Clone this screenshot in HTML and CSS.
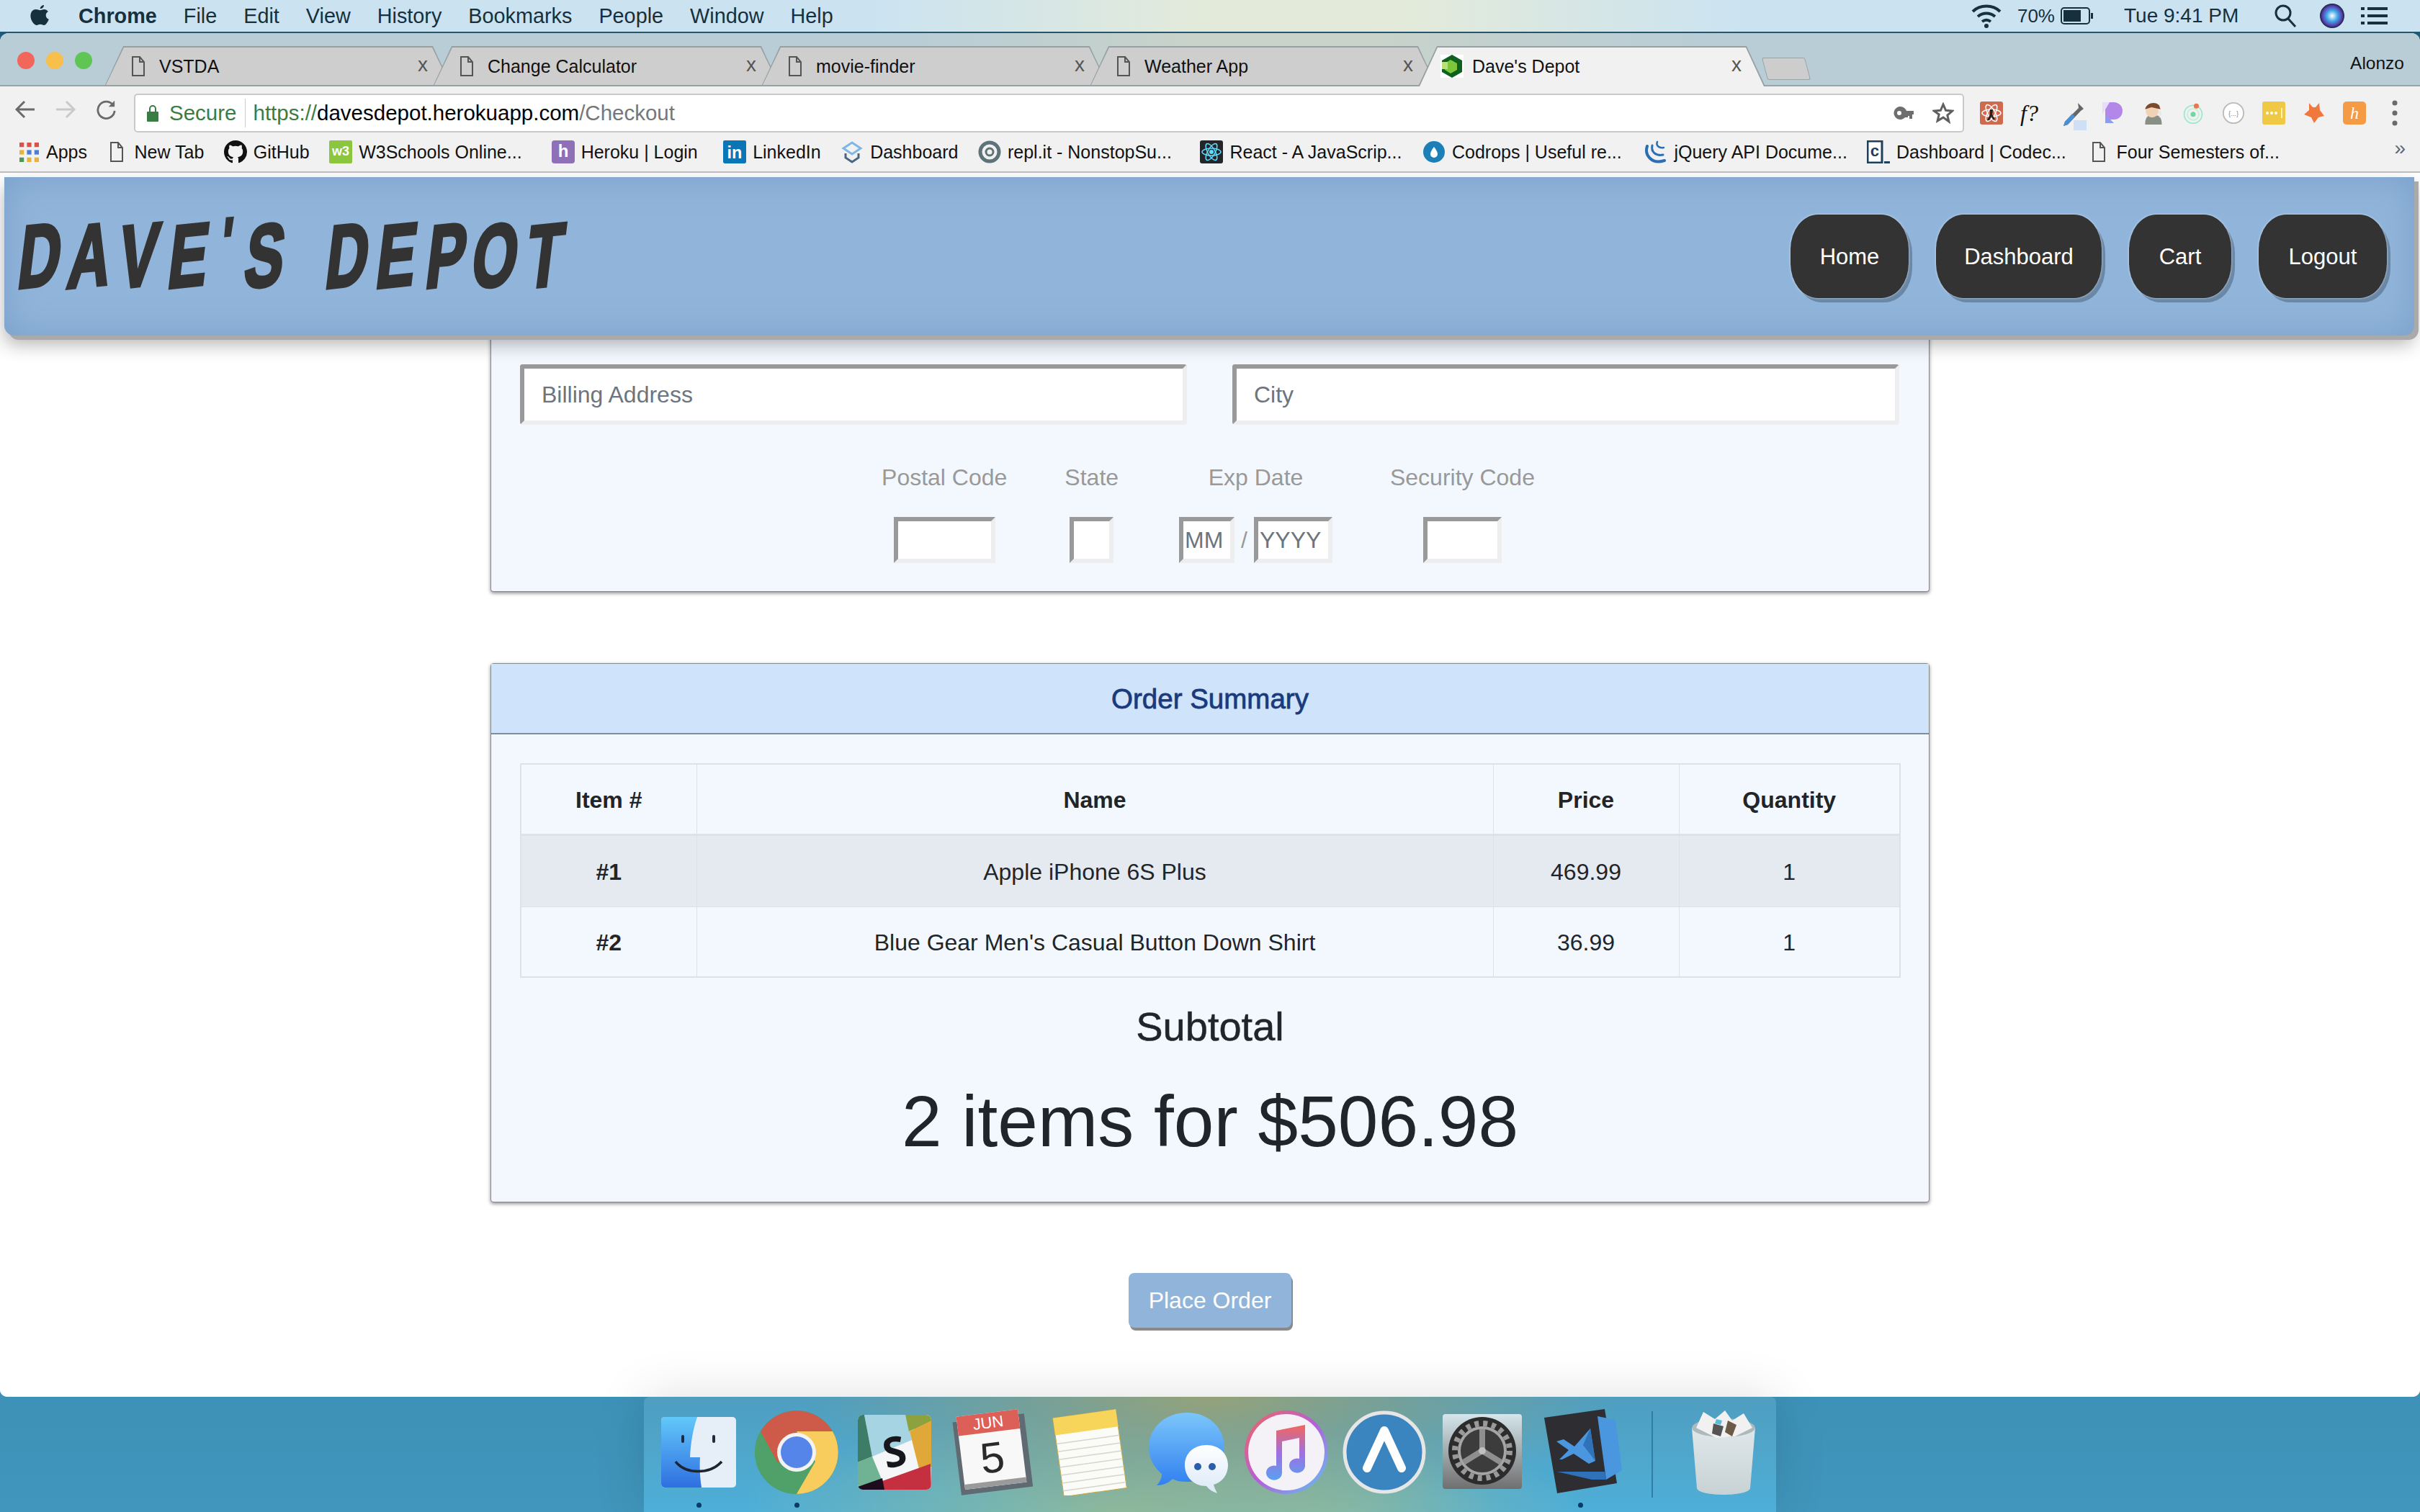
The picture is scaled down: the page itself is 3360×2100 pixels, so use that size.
FILE: index.html
```html
<!DOCTYPE html>
<html lang="en">
<head>
<meta charset="utf-8">
<title>Dave's Depot</title>
<link rel="stylesheet" href="styles.css">
</head>
<body>
<div class="menubar">
  <svg class="apple" viewBox="0 0 28 32"><path d="M20 1c.2 2.400-2.100 5.300-5.200 5.200C14.500 3.600 17.200 1.200 20 1zM14.800 8.300c1.400 0 3-1.300 5.400-1.300 2.200 0 4.300 1 5.600 2.900-4.600 2.700-3.900 9 1 10.900-1.200 3.300-4 8.200-6.800 8.200-1.900 0-2.700-1.200-5-1.200s-3.200 1.200-5 1.200C6.200 29 1.400 22.200 1.400 16c0-5.600 3.700-8.900 7.300-8.900 2.400 0 4.300 1.200 6.100 1.200z"/></svg>
  <nav class="menus">
    <b>Chrome</b><span>File</span><span>Edit</span><span>View</span><span>History</span><span>Bookmarks</span><span>People</span><span>Window</span><span>Help</span>
  </nav>
  <div class="status">
    <svg class="st-wifi" viewBox="0 0 42 38" fill="none" stroke="#16303e" stroke-width="4"><path d="M2 13C12 3 30 3 40 13M9 20c7-6 17-6 24 0M15 27c4-3 8-3 12 0"/><circle cx="21" cy="33" r="3" fill="#16303e" stroke="none"/></svg>
    <span class="st-pct">70%</span>
    <svg class="st-batt" viewBox="0 0 46 24"><rect x="1" y="1" width="39" height="22" rx="4" fill="none" stroke="#16303e" stroke-width="2"/><rect x="4" y="4" width="24" height="16" fill="#16303e"/><rect x="42" y="8" width="3" height="8" fill="#16303e"/></svg>
    <span class="st-time">Tue 9:41 PM</span>
    <svg class="st-search" viewBox="0 0 32 32" fill="none" stroke="#16303e" stroke-width="3"><circle cx="13" cy="12" r="10"/><path d="M20 20l10 11"/></svg>
    <svg class="st-siri" viewBox="0 0 34 34"><defs><radialGradient id="siri"><stop offset="0" stop-color="#fff"/><stop offset=".45" stop-color="#3fa8e8"/><stop offset=".8" stop-color="#5b3fb0"/><stop offset="1" stop-color="#14233a"/></radialGradient></defs><circle cx="17" cy="17" r="17" fill="url(#siri)"/></svg>
    <svg class="st-list" viewBox="0 0 37 24" fill="#16303e"><rect width="5" height="4"/><rect x="9" width="28" height="4"/><rect y="10" width="5" height="4"/><rect x="9" y="10" width="28" height="4"/><rect y="20" width="5" height="4"/><rect x="9" y="20" width="28" height="4"/></svg>
  </div>
</div>

<div class="window">
  <div class="tabstrip">
    <div class="lights"><i class="red"></i><i class="amber"></i><i class="green"></i></div>
    <div class="tabs">
      <div class="tab"><svg class="doc" viewBox="0 0 18 28"><path d="M1 1h10l6 7v19H1z M11 1v7h6" fill="none" stroke="#555" stroke-width="2"/></svg><span>VSTDA</span><em>x</em></div>
      <div class="tab"><svg class="doc" viewBox="0 0 18 28"><path d="M1 1h10l6 7v19H1z M11 1v7h6" fill="none" stroke="#555" stroke-width="2"/></svg><span>Change Calculator</span><em>x</em></div>
      <div class="tab"><svg class="doc" viewBox="0 0 18 28"><path d="M1 1h10l6 7v19H1z M11 1v7h6" fill="none" stroke="#555" stroke-width="2"/></svg><span>movie-finder</span><em>x</em></div>
      <div class="tab"><svg class="doc" viewBox="0 0 18 28"><path d="M1 1h10l6 7v19H1z M11 1v7h6" fill="none" stroke="#555" stroke-width="2"/></svg><span>Weather App</span><em>x</em></div>
      <div class="tab active"><svg class="fav" viewBox="0 0 32 32"><rect width="32" height="32" fill="#fff"/><path d="M16 0l14 8v16l-14 8-14-8V8z" fill="#0f5f1e"/><path d="M14 7l9 5v9l-9 5-8-5v-9z" fill="#7cc63a"/><path d="M2 10h8v10H2z" fill="#b7e07a"/></svg><span>Dave's Depot</span><em>x</em></div>
      <div class="newtab"></div>
    </div>
    <span class="profile">Alonzo</span>
  </div>

  <div class="toolbar">
    <svg class="nav-ic" viewBox="0 0 28 28" fill="none" stroke="#6a6a6a" stroke-width="3"><path d="M27 14H3M13 3L2 14l11 11"/></svg>
    <svg class="nav-ic" viewBox="0 0 28 28" fill="none" stroke="#c9c9c9" stroke-width="3"><path d="M1 14h24M15 3l11 11-11 11"/></svg>
    <svg class="nav-ic" viewBox="0 0 30 30" fill="none" stroke="#6a6a6a" stroke-width="3"><path d="M26 9a12.500 12.500 0 1 0 2 8"/><path d="M28 2v9h-9z" fill="#6a6a6a" stroke="none"/></svg>
    <div class="omnibox">
      <svg class="lock" viewBox="0 0 16 24"><path d="M4 10V6a4 4 0 0 1 8 0v4" fill="none" stroke="#3a7d44" stroke-width="2"/><rect y="10" width="16" height="14" rx="1" fill="#3a7d44"/></svg>
      <span class="secure">Secure</span>
      <span class="url"><span class="u-scheme">https://</span>davesdepot.herokuapp.com<span class="u-path">/Checkout</span></span>
      <svg class="key" viewBox="0 0 28 20" fill="#6e6e6e"><path d="M9 1a9 9 0 1 1-8 12h0A9 9 0 0 1 9 1zm-1 6a3 3 0 1 0 0 6 3 3 0 0 0 0-6z" fill-rule="evenodd"/><path d="M16 7h12v5h-2v6h-4v-4h-2v2h-4z"/></svg>
      <svg class="star" viewBox="0 0 30 30" fill="none" stroke="#5f5f5f" stroke-width="3"><path d="M15 3l3.600 8.300 9 .8-6.800 5.900 2.100 8.800L15 21.100 7.100 25.800 9.200 17 2.400 12.100l9-.8z"/></svg>
    </div>
    <div class="exts">
      <svg viewBox="0 0 32 32"><rect width="32" height="32" rx="3" fill="#cf6a4e"/><g fill="none" stroke="#fff" stroke-width="1.500"><ellipse cx="16" cy="16" rx="13" ry="5"/><ellipse cx="16" cy="16" rx="13" ry="5" transform="rotate(60 16 16)"/><ellipse cx="16" cy="16" rx="13" ry="5" transform="rotate(120 16 16)"/></g><path d="M14 11h4l-1 7 4 7h-3l-2-4-3 5h-3l4-8z" fill="#222"/></svg>
      <span class="fq">f?</span>
      <svg viewBox="0 0 36 40"><path d="M24 2l8 8-4 3-18 19-6 2 2-6L25 9z" fill="#666"/><path d="M6 28l10-11 4 4-10 11-6 2z" fill="#4a8fd6"/><rect x="18" y="26" width="18" height="14" fill="#cfe0f6"/></svg>
      <svg viewBox="0 0 32 32"><path d="M6 1h12a12 12 0 0 1 0 24H6z" fill="#b387ea"/><path d="M2 1h10L2 18z" fill="#e8dcfa"/><path d="M6 30V18L18 30z" fill="#8c9cf0"/></svg>
      <svg viewBox="0 0 32 36"><path d="M4 36c0-8 2-12 6-14h14c4 2 6 6 6 14z" fill="#8a8f86"/><circle cx="15" cy="15" r="10" fill="#f2d2b6"/><path d="M4 12C6 2 20-1 26 6l2 6-14-3z" fill="#7a4a2a"/><path d="M26 12l4 6-4 8z" fill="#e8e8e8"/></svg>
      <svg viewBox="0 0 32 36" fill="none"><circle cx="16" cy="20" r="14" stroke="#9fe8cc" stroke-width="2"/><circle cx="16" cy="20" r="9" stroke="#c0f0dc" stroke-width="2"/><circle cx="16" cy="20" r="4" fill="#6fd99c"/><circle cx="21" cy="7" r="4" fill="#e8784a"/></svg>
      <svg viewBox="0 0 34 34"><circle cx="17" cy="17" r="15" fill="#fff" stroke="#bbb" stroke-width="2"/><text x="17" y="21" text-anchor="middle" class="ext-txt">{...}</text></svg>
      <svg viewBox="0 0 32 32"><rect width="32" height="32" rx="3" fill="#efc945"/><g fill="#fff"><circle cx="7" cy="16" r="2"/><circle cx="13" cy="16" r="2"/><circle cx="19" cy="16" r="2"/><rect x="26" y="9" width="1.500" height="14"/></g></svg>
      <svg viewBox="0 0 32 32"><path d="M9 2l5 6h4l5-6 1 10 6 8-8 2-6 8-4-8-10-4 7-6z" fill="#f0783c"/></svg>
      <svg viewBox="0 0 32 32"><rect width="32" height="32" rx="5" fill="#f59a45"/><text x="16" y="24" text-anchor="middle" class="ext-h">h</text></svg>
      <svg class="kebab" viewBox="0 0 8 36" fill="#6a6a6a"><circle cx="4" cy="4" r="3.500"/><circle cx="4" cy="18" r="3.500"/><circle cx="4" cy="32" r="3.500"/></svg>
    </div>
  </div>

  <div class="bookmarks">
    <div class="bm"><svg class="bi apps" viewBox="0 0 26 26"><g fill="#d9534a"><rect width="6" height="6"/><rect x="10" width="6" height="6"/><rect x="20" width="6" height="6"/></g><rect y="10" width="6" height="6" fill="#e8b23c"/><rect x="10" y="10" width="6" height="6" fill="#4a7fd8"/><rect x="20" y="10" width="6" height="6" fill="#4a7fd8"/><rect y="20" width="6" height="6" fill="#4a9a55"/><rect x="10" y="20" width="6" height="6" fill="#e8b23c"/><rect x="20" y="20" width="6" height="6" fill="#e8b23c"/></svg><span>Apps</span></div>
    <div class="bm"><svg class="bi doc" viewBox="0 0 18 28"><path d="M1 1h10l6 7v19H1z M11 1v7h6" fill="none" stroke="#555" stroke-width="2"/></svg><span>New Tab</span></div>
    <div class="bm"><svg class="bi" viewBox="0 0 16 16"><path d="M8 0C3.580 0 0 3.580 0 8c0 3.540 2.290 6.530 5.470 7.590.4.070.55-.17.55-.38 0-.19-.01-.82-.01-1.490-2.010.37-2.530-.49-2.690-.94-.09-.23-.48-.94-.82-1.130-.28-.15-.68-.52-.01-.53.63-.01 1.080.58 1.230.82.72 1.210 1.870.87 2.330.66.070-.52.28-.87.51-1.070-1.780-.2-3.640-.89-3.640-3.950 0-.87.31-1.590.82-2.150-.08-.2-.36-1.020.08-2.120 0 0 .67-.21 2.200.82.64-.18 1.320-.27 2-.27.68 0 1.360.09 2 .27 1.530-1.040 2.200-.82 2.200-.82.44 1.100.16 1.920.08 2.120.51.56.82 1.270.82 2.150 0 3.070-1.870 3.750-3.650 3.950.29.25.54.73.54 1.480 0 1.070-.01 1.930-.01 2.200 0 .21.15.46.55.38A8.013 8.013 0 0 0 16 8c0-4.420-3.580-8-8-8z" fill="#111"/></svg><span>GitHub</span></div>
    <div class="bm trunc"><svg class="bi" viewBox="0 0 32 32"><rect width="32" height="32" rx="2" fill="#8cc63f"/><text x="16" y="21" text-anchor="middle" class="bi-w3">w3</text></svg><span>W3Schools Online...</span></div>
    <div class="bm wide"><svg class="bi" viewBox="0 0 32 32"><rect width="32" height="32" rx="4" fill="#8e6fb8"/><text x="16" y="23" text-anchor="middle" class="bi-h">h</text></svg><span>Heroku | Login</span></div>
    <div class="bm"><svg class="bi" viewBox="0 0 30 30"><rect width="30" height="30" rx="2" fill="#0b76b5"/><text x="15" y="23" text-anchor="middle" class="bi-in">in</text></svg><span>LinkedIn</span></div>
    <div class="bm"><svg class="bi" viewBox="0 0 32 32" fill="none" stroke-width="3"><path d="M4 11l12-8 12 8-12 8z" stroke="#7db7ea"/><path d="M7 18v6l9 6 9-6v-6" stroke="#4a6680"/></svg><span>Dashboard</span></div>
    <div class="bm trunc"><svg class="bi" viewBox="0 0 32 32" fill="none"><circle cx="16" cy="16" r="13" stroke="#5e727a" stroke-width="5"/><circle cx="16" cy="16" r="5" stroke="#5e727a" stroke-width="3"/></svg><span>repl.it - NonstopSu...</span></div>
    <div class="bm trunc"><svg class="bi" viewBox="0 0 32 32"><rect width="32" height="32" rx="3" fill="#22262b"/><g fill="none" stroke="#61dafb" stroke-width="1.500"><ellipse cx="16" cy="16" rx="13" ry="5"/><ellipse cx="16" cy="16" rx="13" ry="5" transform="rotate(60 16 16)"/><ellipse cx="16" cy="16" rx="13" ry="5" transform="rotate(120 16 16)"/></g><circle cx="16" cy="16" r="3" fill="#61dafb"/></svg><span>React - A JavaScrip...</span></div>
    <div class="bm trunc"><svg class="bi" viewBox="0 0 32 32"><circle cx="16" cy="16" r="15" fill="#1d7fb8"/><path d="M16 9c3 4 5 7 5 10a5 5 0 0 1-10 0c0-3 2-6 5-10z" fill="#fff"/></svg><span>Codrops | Useful re...</span></div>
    <div class="bm trunc"><svg class="bi" viewBox="0 0 32 32" fill="none" stroke="#2a6fb5" stroke-linecap="round"><path d="M4 8c-4 12 6 26 24 20" stroke-width="4"/><path d="M11 7c-2 9 5 15 15 13" stroke-width="3"/><path d="M18 2c-2 5 2 9 9 8" stroke-width="2.500"/></svg><span>jQuery API Docume...</span></div>
    <div class="bm trunc"><svg class="bi" viewBox="0 0 32 32"><rect x="1" y="1" width="20" height="30" fill="#fff" stroke="#1f4058" stroke-width="3"/><text x="11" y="22" text-anchor="middle" class="bi-c">c</text><rect x="24" y="29" width="8" height="3" fill="#1f4058"/></svg><span>Dashboard | Codec...</span></div>
    <div class="bm"><svg class="bi doc" viewBox="0 0 18 28"><path d="M1 1h10l6 7v19H1z M11 1v7h6" fill="none" stroke="#555" stroke-width="2"/></svg><span>Four Semesters of...</span></div>
    <span class="more">»</span>
  </div>

  <div class="page">
    <header class="site-header">
      <div class="logo"><i>D</i><i>A</i><i>V</i><i>E</i><i class="apos">'</i><i>S</i> <i class="gap">D</i><i>E</i><i>P</i><i>O</i><i>T</i></div>
      <nav class="site-nav">
        <a class="n-home">Home</a><a class="n-dash">Dashboard</a><a class="n-cart">Cart</a><a class="n-out">Logout</a>
      </nav>
    </header>

    <section class="card card-billing">
      <div class="addr-row">
        <input class="field" placeholder="Billing Address">
        <input class="field" placeholder="City">
      </div>
      <div class="small-row">
        <div class="group"><label>Postal Code</label><input class="box w-postal"></div>
        <div class="group"><label>State</label><input class="box w-state"></div>
        <div class="group g-exp"><label>Exp Date</label><div class="exp"><input class="box w-mm" placeholder="MM"><span>/</span><input class="box w-yy" placeholder="YYYY"></div></div>
        <div class="group"><label>Security Code</label><input class="box w-sec"></div>
      </div>
    </section>

    <section class="card card-order">
      <h2 class="card-title">Order Summary</h2>
      <div class="card-body">
        <table>
          <colgroup><col class="c1"><col class="c2"><col class="c3"><col class="c4"></colgroup>
          <thead><tr><th>Item #</th><th>Name</th><th>Price</th><th>Quantity</th></tr></thead>
          <tbody>
            <tr class="odd"><th>#1</th><td>Apple iPhone 6S Plus</td><td>469.99</td><td>1</td></tr>
            <tr><th>#2</th><td>Blue Gear Men's Casual Button Down Shirt</td><td>36.99</td><td>1</td></tr>
          </tbody>
        </table>
        <h3 class="subtotal">Subtotal</h3>
        <p class="total">2 items for $506.98</p>
      </div>
    </section>

    <div class="order-wrap"><button class="place">Place Order</button></div>
  </div>
</div>

<div class="dock-row">
  <div class="dock">
    <div class="slot running"><svg viewBox="0 0 120 120"><defs><linearGradient id="fb" x1="0" y1="0" x2="0" y2="1"><stop offset="0" stop-color="#62c8fa"/><stop offset="1" stop-color="#2f6fe0"/></linearGradient></defs><rect x="8" y="11" width="104" height="98" rx="5" fill="#e6eef7"/><path d="M13 11h45c-6 18-9 36-10 56h14c-1 15 0 29 2 42H13a5 5 0 0 1-5-5V16a5 5 0 0 1 5-5z" fill="url(#fb)"/><rect x="36" y="36" width="4" height="11" rx="2" fill="#1b2c42"/><rect x="79" y="36" width="4" height="11" rx="2" fill="#1b2c42"/><path d="M28 73c14 18 48 18 64 0" fill="none" stroke="#1b2430" stroke-width="3.500"/></svg></div>
    <div class="slot running"><svg viewBox="0 0 120 120"><circle cx="60" cy="60" r="58" fill="#4fa169"/><path d="M10 31A58 58 0 0 0 60 118L86 73 34 75z" fill="#4fa169"/><path d="M110 31A58 58 0 0 1 60 118L86 73 60 31z" fill="#f8cc5d"/><path d="M10 31A58 58 0 0 1 110 31H60L34 75z" fill="#ce5a49"/><circle cx="60" cy="60" r="27" fill="#f3f3f3"/><circle cx="60" cy="60" r="22" fill="#5585e8"/></svg></div>
    <div class="slot"><svg viewBox="0 0 120 120"><defs><clipPath id="sl"><rect x="9" y="8" width="102" height="104" rx="7"/></clipPath></defs><g clip-path="url(#sl)"><rect x="9" y="8" width="102" height="104" fill="#f4f6f8"/><path d="M18 8H75L84 43 29 66z" fill="#a6d4e2"/><path d="M75 8H111V18L80 31z" fill="#8da23f"/><path d="M81 31L111 16V80L95 87z" fill="#e0a838"/><path d="M9 8H18L29 66 9 74z" fill="#3d7d68"/><path d="M9 74L29 66 43 100 9 112z" fill="#70b394"/><path d="M43 100L110 76 111 112H45z" fill="#c43040"/><path d="M9 108L43 96 46 112H9z" fill="#1e0c1e"/></g><text x="60" y="80" text-anchor="middle" class="slack-s" transform="rotate(-12 60 60)">S</text></svg></div>
    <div class="slot"><svg viewBox="0 0 120 120"><g transform="rotate(-7 60 60)"><rect x="10" y="12" width="100" height="102" fill="#5f6a72"/><rect x="16" y="5" width="86" height="102" fill="#f8f8f8"/><rect x="16" y="5" width="86" height="27" fill="#dd6058"/><rect x="16" y="100" width="86" height="7" fill="#9a9a9a"/><text x="59" y="26" text-anchor="middle" class="cal-m">JUN</text><text x="59" y="88" text-anchor="middle" class="cal-d">5</text></g></svg></div>
    <div class="slot"><svg viewBox="0 0 120 120"><g transform="rotate(-8 60 60)"><rect x="15" y="6" width="88" height="110" fill="#fbfbf8" stroke="#c9a84a"/><rect x="15" y="6" width="88" height="24" fill="#f7d55a"/><g stroke="#d5d5ce" stroke-width="1.500"><path d="M15 42h88M15 53h88M15 64h88M15 75h88M15 86h88M15 97h88M15 108h88"/></g></g></svg></div>
    <div class="slot"><svg viewBox="0 0 120 120"><defs><linearGradient id="mb" x1="0" y1="0" x2="0" y2="1"><stop offset="0" stop-color="#7cc6fa"/><stop offset="1" stop-color="#3180f0"/></linearGradient><linearGradient id="mw" x1="0" y1="0" x2="0" y2="1"><stop offset="0" stop-color="#fff"/><stop offset="1" stop-color="#dbe8f8"/></linearGradient></defs><path d="M58 5c30 0 52 21 52 48 0 27-22 48-52 48-8 0-14-1-20-4-6 6-14 9-22 9 5-5 7-11 7-16C11 80 5 67 5 53 5 26 28 5 58 5z" fill="url(#mb)"/><path d="M85 50c19 0 30 13 30 28 0 13-8 24-20 27 1 4 3 8 5 12-6-2-11-5-15-10-18 0-30-13-30-29 0-16 12-28 30-28z" fill="url(#mw)"/><circle cx="73" cy="80" r="5" fill="#2a5ea8"/><circle cx="93" cy="80" r="5" fill="#2a5ea8"/></svg></div>
    <div class="slot"><svg viewBox="0 0 120 120"><defs><linearGradient id="ir" x1="0" y1="0" x2="1" y2="1"><stop offset="0" stop-color="#f2665c"/><stop offset=".5" stop-color="#b45fd8"/><stop offset="1" stop-color="#5cc8f8"/></linearGradient><linearGradient id="in" x1="0" y1="0" x2="0" y2="1"><stop offset="0" stop-color="#f2665c"/><stop offset=".5" stop-color="#a06fe0"/><stop offset="1" stop-color="#5aa0f0"/></linearGradient></defs><circle cx="60" cy="60" r="58" fill="url(#ir)"/><circle cx="60" cy="60" r="53" fill="#f4f2f6"/><path d="M46 30l40-8v57a11 10 0 1 1-8-10V40l-24 5v44a11 10 0 1 1-8-10z" fill="url(#in)"/></svg></div>
    <div class="slot"><svg viewBox="0 0 120 120"><circle cx="60" cy="60" r="55" fill="#3a84bf" stroke="#e6e6e6" stroke-width="5"/><path d="M36 82L60 30 84 82" fill="none" stroke="#fff" stroke-width="12" stroke-linecap="round" stroke-linejoin="round"/></svg></div>
    <div class="slot"><svg viewBox="0 0 120 120"><defs><linearGradient id="sp" x1="0" y1="0" x2="0" y2="1"><stop offset="0" stop-color="#d5e6ec"/><stop offset="1" stop-color="#6f6f6f"/></linearGradient></defs><rect x="5" y="7" width="110" height="104" rx="4" fill="url(#sp)"/><circle cx="60" cy="58" r="47" fill="#2c2c2c"/><circle cx="60" cy="58" r="38" fill="none" stroke="#999" stroke-width="8" stroke-dasharray="6 6"/><circle cx="60" cy="58" r="32" fill="#3c3c3c" stroke="#a5a5a5" stroke-width="4"/><g stroke="#8f8f8f" stroke-width="8"><path d="M60 58V28M60 58L34 74M60 58l26 16"/></g><circle cx="60" cy="58" r="5" fill="#c0c0c0"/></svg></div>
    <div class="slot running wide-slot"><svg viewBox="0 0 120 120"><path d="M6 12L90 0 107 103 24 117z" fill="#2e2e32"/><path d="M80 10l25 5 9 70-22 13z" fill="#4a97e0"/><path d="M24 87H90L92 98 72 98z" fill="#2f72ba"/><path d="M23 45L33 42 48 52 70 27 77 72 68 76 47 62 31 70 27 70 40 57Z" fill="#4a97e0"/><path d="M70 27L60 50 77 72z" fill="#2f72ba"/></svg></div>
    <div class="dock-sep"></div>
    <div class="slot trash"><svg viewBox="0 0 100 120"><defs><linearGradient id="tr" x1="0" y1="0" x2="0" y2="1"><stop offset="0" stop-color="#dfe7ea"/><stop offset="1" stop-color="#c8d2d4"/></linearGradient></defs><path d="M6 26h88l-7 84c-1 6-20 9-37 9s-36-3-37-9z" fill="url(#tr)"/><ellipse cx="50" cy="26" rx="44" ry="13" fill="#aeb9bd"/><path d="M12 26L22 4 38 14 52 2 62 16 78 6 90 26 66 38 40 40z" fill="#f1f1f1"/><path d="M36 20l14 4-4 14-12-4z" fill="#555"/><path d="M56 16l12 6-6 16-10-6z" fill="#6b5a45"/><path d="M40 14l8 2-2 6-8-2z" fill="#56bcd8"/></svg></div>
  </div>
</div>
</body>
</html>
```
FILE: styles.css
```css
* { box-sizing: border-box; }
html, body { margin: 0; padding: 0; }
body {
  width: 3360px;
  height: 2100px;
  overflow: hidden;
  display: flex;
  flex-direction: column;
  font-family: "Liberation Sans", Arial, sans-serif;
  background: linear-gradient(#1d5b78, #4096bd);
}

/* macOS menu bar */
.menubar {
  height: 46px;
  flex: none;
  display: flex;
  align-items: center;
  padding: 0 45px 0 41px;
  color: #16303e;
  font-size: 28px;
  border-bottom: 2px solid #24566f;
  background: linear-gradient(90deg, #cbe3f1 0 36%, #e3ead9 50% 58%, #cbe3f1 72% 100%);
}
.apple { width: 28px; height: 32px; fill: #16303e; margin-right: 40px; }
.menus { display: flex; gap: 37px; font-size: 28.800px; }
.status { margin-left: auto; display: flex; align-items: center; }
.st-wifi { width: 42px; height: 38px; }
.st-pct { font-size: 26px; margin-left: 22px; }
.st-batt { width: 46px; height: 24px; margin-left: 8px; }
.st-time { margin-left: 42px; width: 160px; white-space: nowrap; }
.st-search { width: 32px; height: 32px; margin-left: 48px; }
.st-siri { width: 34px; height: 34px; margin-left: 32px; }
.st-list { width: 37px; height: 24px; margin-left: 23px; }

/* browser window */
.window {
  flex: none;
  height: 1894px;
  background: #fff;
  display: flex;
  flex-direction: column;
  border-radius: 12px 12px 10px 10px;
  overflow: hidden;
}
.tabstrip {
  height: 74px;
  flex: none;
  display: flex;
  align-items: flex-end;
  position: relative;
  border-bottom: 2px solid #97a5ab;
  background: linear-gradient(90deg, #b9cdd6 0 38%, #c9d3c9 50% 56%, #b9cdd6 70% 100%);
}
.lights { position: absolute; left: 24px; top: 26px; display: flex; gap: 16px; }
.lights i { width: 24px; height: 24px; border-radius: 50%; display: block; }
.lights .red { background: #f2665c; }
.lights .amber { background: #f8bf4d; }
.lights .green { background: #60c653; }
.tabs { display: flex; align-items: flex-end; margin-left: 145px; height: 56px; margin-bottom: -2px; }
.tab {
  width: 482px;
  height: 56px;
  flex: none;
  margin-right: -26px;
  padding: 0 0 0 38px;
  display: flex;
  align-items: center;
  position: relative;
  font-size: 25px;
  color: #111;
  background: #97a0a3;
  clip-path: polygon(0 100%, 26px 0, calc(100% - 26px) 0, 100% 100%);
}
.tab::before {
  content: "";
  position: absolute;
  inset: 2px 0 2px 0;
  background: #cecece;
  clip-path: polygon(2px 100%, 27px 0, calc(100% - 27px) 0, calc(100% - 2px) 100%);
}
.tab > * { position: relative; }
.tab .doc { width: 18px; height: 28px; margin-right: 20px; }
.tab .fav { width: 32px; height: 32px; margin-right: 12px; }
.tab em { position: absolute; right: 33px; font-style: normal; font-size: 28px; color: #555; top: 10px; }
.tab.active { z-index: 2; padding-left: 31px; }
.tab.active::before { background: #f1f1f1; inset: 2px 0 0 0; }
.newtab {
  width: 60px;
  height: 31px;
  margin: 0 0 9px 25px;
  background: #cdcdcd;
  border: 1px solid #9aa3a6;
  border-radius: 3px;
  transform: skewX(15deg);
  flex: none;
}
.profile { position: absolute; right: 22px; top: 28px; font-size: 24.500px; color: #111; }

.toolbar {
  height: 64px;
  flex: none;
  display: flex;
  align-items: center;
  background: #f1f1f1;
  padding-left: 21px;
}
.nav-ic { width: 28px; height: 28px; margin-right: 28px; flex: none; }
.omnibox {
  width: 2541px;
  height: 54px;
  margin: 10px 0 0 -3px;
  flex: none;
  display: flex;
  align-items: center;
  background: #fff;
  border: 2px solid #c9c9c9;
  border-radius: 5px;
  padding: 0 12px 0 16px;
  font-size: 29.500px;
}
.lock { width: 16px; height: 24px; margin-right: 15px; }
.secure { color: #3a7d44; padding-right: 12px; border-right: 1px solid #ccc; line-height: 40px; }
.url { margin-left: 10px; color: #000; }
.u-scheme { color: #3a7d44; }
.u-path { color: #777; }
.key { width: 28px; height: 20px; margin-left: auto; }
.star { width: 30px; height: 30px; margin-left: 26px; }
.exts { display: flex; align-items: center; margin: 10px 0 0 22px; }
.exts > svg, .fq { width: 32px; height: 32px; margin-right: 24px; flex: none; }
.exts > svg:nth-child(3) { width: 36px; height: 40px; margin: 8px 20px 0 0; }
.fq { font-family: "Liberation Serif", serif; font-style: italic; font-size: 32px; color: #111; white-space: nowrap; line-height: 32px; }
.exts > svg.kebab { width: 8px; height: 36px; margin: 0 0 0 12px; }
.ext-txt { font: 10px "Liberation Sans", sans-serif; fill: #888; }
.ext-h { font: italic 24px "Liberation Serif", serif; fill: #fff; }

.bookmarks {
  height: 56px;
  flex: none;
  display: flex;
  align-items: center;
  gap: 27.500px;
  background: #f1f1f1;
  border-bottom: 2px solid #bdbdbd;
  padding: 0 0 0 27px;
  font-size: 25px;
  color: #111;
  position: relative;
}
.bm { display: flex; align-items: center; white-space: nowrap; flex: none; line-height: 34px; }
.bi { width: 32px; height: 32px; margin-right: 9px; flex: none; }
.bi.apps { width: 27px; height: 27px; margin-right: 10px; }
.bi.doc { width: 18px; height: 28px; margin: 0 15px 0 5px; }
.bm.trunc { width: 281px; }
.bm.wide { width: 211px; }
.more { position: absolute; right: 20px; top: 6px; font-size: 28px; color: #666; }
.bi-w3 { font: bold 18px "Liberation Sans", sans-serif; fill: #fff; }
.bi-h { font: bold 24px "Liberation Sans", sans-serif; fill: #fff; }
.bi-in { font: bold 22px "Liberation Sans", sans-serif; fill: #fff; }
.bi-c { font: bold 22px "Liberation Mono", monospace; fill: #1f4058; }

/* page */
.page {
  flex: 1;
  position: relative;
  overflow: hidden;
  background: #fff;
  font-size: 32px;
  color: #212529;
  padding-top: 40px;
}
.site-header {
  position: absolute;
  z-index: 5;
  left: 6px;
  right: 8px;
  top: 6px;
  height: 220px;
  display: flex;
  align-items: center;
  justify-content: space-between;
  padding: 0 38px 0 16px;
  background: #91b5da;
  border-radius: 0 0 14px 14px;
  box-shadow: inset 0 0 50px rgba(70,110,165,.3), 6px 6px 0 #aaa, 0 12px 26px rgba(0,0,0,.3);
}
.logo { display: flex; align-items: center; color: #333; font-size: 122px; font-weight: 700; line-height: 1; margin-top: -2px; text-shadow: 0 0 3px #e4f2ff; }
.logo i {
  font-style: normal;
  width: 68.500px;
  display: inline-flex;
  justify-content: center;
  -webkit-text-stroke: 5px #333;
  transform: skewY(-6deg) skewX(-7deg) scaleX(.66);
}
.logo i.apos { width: 38px; font-size: 90px; margin-top: -40px; }
.logo i.gap { margin-left: 46px; }
.site-nav { display: flex; gap: 38px; }
.site-nav a {
  height: 116px;
  display: flex;
  align-items: center;
  justify-content: center;
  padding-top: 2px;
  color: #fff;
  font-size: 31px;
  background: #333;
  border-radius: 38px / 48px;
  box-shadow: 0 0 3px #d6e8fa, 5px 6px 0 #6a87a5;
}
.n-home { width: 164px; }
.n-dash { width: 230px; }
.n-cart { width: 142px; }
.n-out { width: 178px; }

.card {
  width: 1998px;
  margin: 0 auto;
  background: #f3f8ff;
  border: 1px solid #8a8a8a;
  border-radius: 4px;
  box-shadow: 0 2px 5px rgba(0,0,0,.45);
}
.card-billing { height: 542px; padding: 226px 41px 0 40px; border-top: 0; }
.addr-row { display: flex; justify-content: space-between; }
.field, .box {
  font: inherit;
  color: #495057;
  background: #fff;
  border-width: 6px;
  border-style: solid;
  border-color: #999 #eee #eee #999;
  border-radius: 4px;
  outline: none;
}
.field { width: 926px; height: 84px; padding: 0 24px; }
.field::placeholder, .box::placeholder { color: #6c757d; opacity: 1; }
.small-row { display: flex; justify-content: center; gap: 80px; margin-top: 55px; padding-right: 4px; }
.group { display: flex; flex-direction: column; align-items: center; gap: 36px; }
.g-exp { margin-left: 4px; }
.group label { color: #999; line-height: 37px; }
.box { height: 64px; padding: 0 2px; border-radius: 0; }
.w-postal { width: 141px; }
.w-state { width: 61px; }
.w-mm { width: 77px; }
.w-yy { width: 109px; }
.w-sec { width: 109px; }
.exp { display: flex; align-items: center; gap: 9px; color: #999; }

.card-order { height: 749px; margin-top: 99px; }
.card-title {
  margin: 0;
  height: 98px;
  line-height: 98px;
  text-align: center;
  font-size: 38.500px;
  font-weight: 400;
  -webkit-text-stroke: .8px #1a3a7e;
  color: #1a3a7e;
  background: #cfe3fb;
  border-bottom: 2px solid #7d8ea3;
}
.card-body { padding: 40px 40px 0; }
table { width: 1915px; border-collapse: collapse; table-layout: fixed; text-align: center; border: 2px solid #dee2e6; }
.c1 { width: 244px; }
.c2 { width: 1106px; }
.c3 { width: 258px; }
.c4 { width: 307px; }
th, td { height: 98px; padding: 3px 0 0; border: 1px solid #dee2e6; font-size: 32px; }
thead th { border-bottom-width: 3px; }
tbody tr.odd th, tbody tr.odd td { height: 100px; }
.odd th, .odd td { background: #e5eaf1; }
.subtotal { margin: 34px 0 0; font-size: 56px; font-weight: 400; -webkit-text-stroke: .5px #212529; line-height: 1.2; text-align: center; }
.total { margin: 38px 0 0; font-size: 100px; line-height: 1.2; text-align: center; }

.order-wrap { display: flex; justify-content: center; margin-top: 98px; }
.place {
  width: 226px;
  height: 76px;
  font: inherit;
  color: #fff;
  background: #91b5da;
  border: 0;
  border-radius: 8px;
  box-shadow: 2px 4px 0 #8a8a8a;
}

/* dock */
.dock-row { flex: 1; display: flex; justify-content: center; }
.dock {
  width: 1572px;
  display: flex;
  align-items: center;
  padding: 0 0 0 8px;
  border-radius: 8px 8px 0 0;
  position: relative;
  box-shadow: 0 0 70px rgba(0,0,0,.13);
  background:
    radial-gradient(ellipse 560px 170px at 50% 0, rgba(152,162,118,.95), transparent),
    radial-gradient(ellipse 520px 140px at 42% 100%, rgba(148,186,150,.9), transparent),
    radial-gradient(ellipse 360px 110px at 60% 100%, rgba(150,186,150,.7), transparent),
    linear-gradient(180deg, #4f9ec0, #4eafd8);
}
.slot { width: 136px; height: 120px; flex: none; position: relative; display: flex; justify-content: center; margin-top: -6px; }
.slot svg { width: 120px; height: 120px; }
.slot.running::after {
  content: "";
  position: absolute;
  left: 50%;
  bottom: -17px;
  width: 7px;
  height: 7px;
  margin-left: -3px;
  border-radius: 50%;
  background: #0a3a66;
}
.slot.wide-slot::after { left: 47%; }
.wide-slot { width: 144px; }
.dock-sep { width: 2px; height: 120px; background: #2f7ea8; margin: 0 0 0 23px; flex: none; }
.trash { width: 100px; margin-left: 48px; }
.trash svg { width: 100px; }
.slack-s { font: bold 58px "Open Sans", "Liberation Sans", sans-serif; fill: #16161c; }
.cal-m { font: 22px "Liberation Sans", sans-serif; fill: #fff; }
.cal-d { font: 60px "Liberation Sans", sans-serif; fill: #2a2a2a; }
```
